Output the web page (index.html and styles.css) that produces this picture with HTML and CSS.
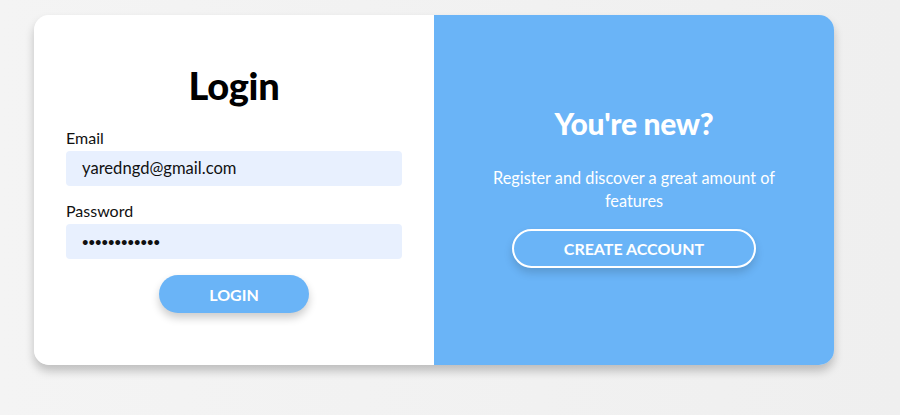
FILE: index.html
```html
<!DOCTYPE html>
<html>
<head>
<meta charset="utf-8">
<link rel="stylesheet" href="styles.css">
</head>
<body>
<div class="card">
  <div class="panel login">
    <h1 class="title">Login</h1>
    <label class="label">Email</label>
    <div class="input">yaredngd@gmail.com</div>
    <label class="label">Password</label>
    <div class="input dots">••••••••••••</div>
    <button class="btn">LOGIN</button>
  </div>
  <div class="panel side">
    <h2 class="title light">You're new?</h2>
    <p class="text">Register and discover a great amount of features</p>
    <button class="btn outline">CREATE ACCOUNT</button>
  </div>
</div>
</body>
</html>
```
FILE: styles.css
```css
html, body {
  margin: 0;
  height: 100%;
}
body {
  background: linear-gradient(90deg, #f4f4f4, #efefef);
  font-family: Lato, "Open Sans", sans-serif;
  padding: 15px 0 0 34px;
  box-sizing: border-box;
}
.card {
  width: 800px;
  height: 350px;
  display: flex;
  border-radius: 15px;
  overflow: hidden;
  box-shadow: 0 6px 10px rgba(0,0,0,0.22);
}
.panel {
  width: 400px;
  box-sizing: border-box;
  display: flex;
  flex-direction: column;
}
.login {
  background: #fff;
  padding: 48px 32px 0;
}
.title {
  margin: 0;
  font-weight: 900;
  text-align: center;
  font-size: 38px;
  line-height: 44px;
  letter-spacing: -0.3px;
}
.login .title {
  margin-bottom: 21px;
}
.label {
  font-size: 16px;
  color: #111;
  line-height: 20px;
  margin-bottom: 3px;
}
.input {
  height: 35px;
  background: #e8f0fe;
  border-radius: 4px;
  font-size: 16.6px;
  line-height: 35px;
  padding-left: 16px;
  color: #111;
  margin-bottom: 15px;
}
.input.dots {
  font-size: 11.2px;
  font-weight: 700;
  margin-bottom: 16px;
}
.btn {
  align-self: center;
  font-family: Lato, sans-serif;
  font-weight: 700;
  font-size: 16px;
  color: #fff;
  background: #6ab4f7;
  border: none;
  border-radius: 20px;
  width: 150px;
  height: 38px;
  box-shadow: 0 5px 8px rgba(0,0,0,0.2);
}
.side {
  background: #6ab4f7;
  align-items: center;
  padding-top: 86px;
  color: #fff;
}
.title.light {
  font-size: 30px;
  color: #fff;
}
.text {
  width: 300px;
  text-align: center;
  font-size: 16.3px;
  line-height: 23px;
  margin: 21px 0 17px;
}
.btn.outline {
  width: 244px;
  height: 39px;
  border: 2px solid #fff;
  background: transparent;
  box-shadow: 0 5px 8px rgba(0,0,0,0.15);
}
```
